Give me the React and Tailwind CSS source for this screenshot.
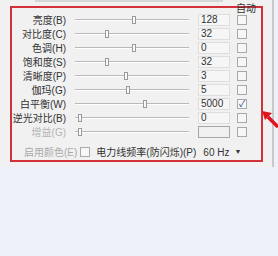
import React from 'react';

const rows = [
  { label: '亮度(B)', value: '128', pos: 57 },
  { label: '对比度(C)', value: '32', pos: 30 },
  { label: '色调(H)', value: '0', pos: 57 },
  { label: '饱和度(S)', value: '32', pos: 30 },
  { label: '清晰度(P)', value: '3', pos: 49 },
  { label: '伽玛(G)', value: '5', pos: 51 },
  { label: '白平衡(W)', value: '5000', pos: 68, checked: true },
  { label: '逆光对比(B)', value: '0', pos: 3 },
  { label: '增益(G)', value: '', pos: 3, disabled: true },
];

function Check({ checked }) {
  return (
    <div className="w-[10px] h-[10px] border border-[#a9a9a9] bg-[#f7f7f7] flex items-center justify-center text-[9px] leading-none text-[#3a4a7a]">
      {checked ? '✓' : ''}
    </div>
  );
}

function Row({ label, value, pos, checked, disabled }) {
  return (
    <div className="flex items-center h-[14px]">
      <div className={`w-[54px] text-right whitespace-nowrap ${disabled ? 'text-[#b4b4b4]' : 'text-[#333]'}`}>{label}</div>
      {/* slider */}
      <div className="relative ml-[9px] w-[114px] h-[14px] flex items-center">
        <div className="w-full h-[2px] border-t border-[#b9b9b9] border-b border-b-white" />
        <div
          className="absolute top-[3px] w-[4px] h-[8px] border border-[#9a9a9a] bg-[#fafafa]"
          style={{ left: pos }}
        />
      </div>
      <div
        className={`ml-[9px] w-[32px] h-[12px] pl-[2px] flex items-center leading-none ${
          disabled ? 'border border-[#a8a8a8] bg-[#f0f0f0]' : 'border border-[#dedede] bg-[#f6f6f6]'
        }`}
      >
        {value}
      </div>
      <div className="ml-[7px]">
        <Check checked={checked} />
      </div>
    </div>
  );
}

export default function App() {
  return (
    <div
      className="relative w-[278px] h-[256px] bg-[#edf0f8] overflow-hidden text-[10px] text-[#333]"
      style={{ fontFamily: '"Liberation Sans", "Noto Sans CJK SC", sans-serif' }}
    >
      <div className="h-[167px] w-[274px] bg-[#f1f1f1] border-r-2 border-[#c9c9c9] pt-[6px]">
        <div className="ml-[35px] -mt-[6px] mb-[4px] w-[188px] h-[2px] bg-[#d6d6d6]" />
        <div className="ml-[10px] w-[253px] h-[156px] border-2 border-[#d2313a] pt-[5px]">
          <div className="flex flex-col">
            {rows.map((r) => (
              <Row key={r.label} {...r} />
            ))}
          </div>
          <div className="flex items-center h-[14px] mt-[6px]">
            <div className="ml-[12px] text-[#a9a9a9] whitespace-nowrap">启用颜色(E)</div>
            <div className="ml-[3px]">
              <Check />
            </div>
            <div className="ml-[6px] whitespace-nowrap">电力线频率(防闪烁)(P)</div>
            <div className="ml-[7px] flex items-center gap-[5px] whitespace-nowrap">
              <span>60 Hz</span>
              <span className="text-[7px]">▼</span>
            </div>
          </div>
        </div>
      </div>

      {/* 自动 header over the border */}
      <div className="absolute left-[236px] top-[4px] leading-none text-[10px] text-[#333]">自动</div>

      {/* red arrow */}
      <svg className="absolute left-[260px] top-[108px]" width="18" height="22" viewBox="0 0 18 22">
        <path d="M18 19 L8 9" stroke="#e0141c" strokeWidth="3.5" />
        <path d="M2 3 L12 5 L5 12 Z" fill="#e0141c" />
      </svg>
    </div>
  );
}
